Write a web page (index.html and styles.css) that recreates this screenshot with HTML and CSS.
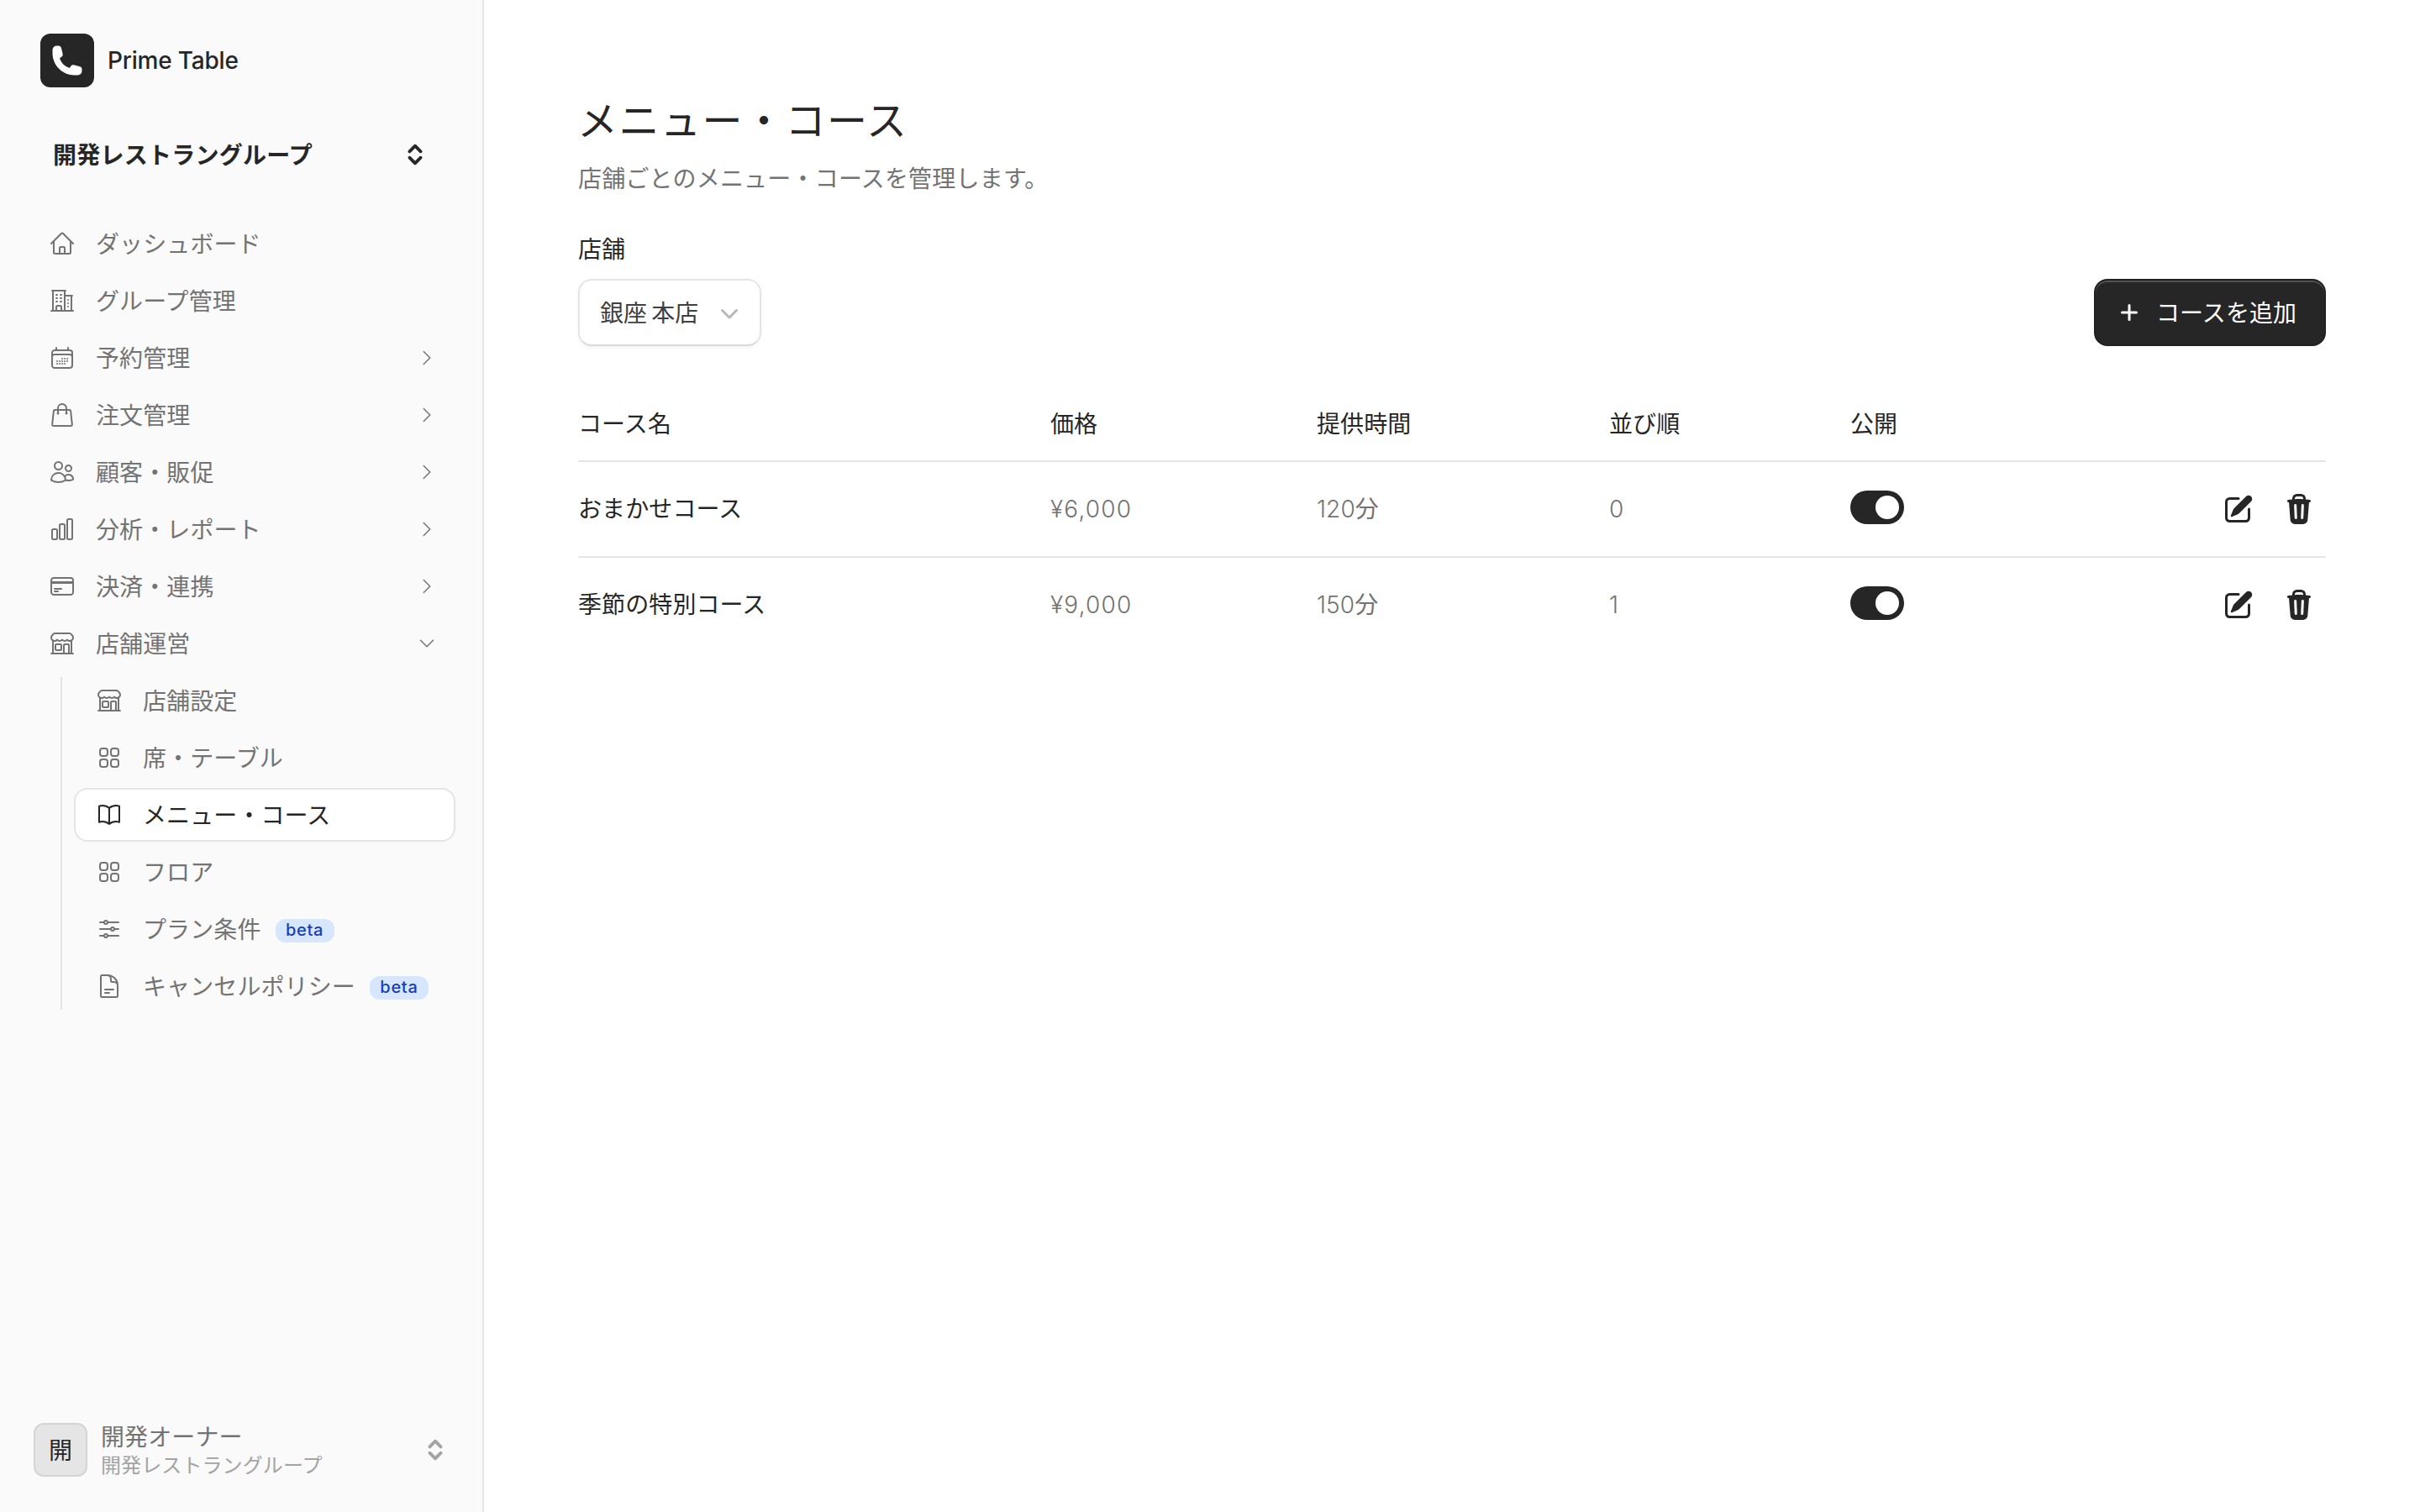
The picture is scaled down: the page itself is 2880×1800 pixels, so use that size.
FILE: index.html
```html
<!DOCTYPE html>
<html lang="ja">
<head>
<meta charset="utf-8">
<title>メニュー・コース</title>
<link rel="stylesheet" href="styles.css">
</head>
<body>
<svg class="sprite" aria-hidden="true">
  <symbol id="home" viewBox="0 0 24 24"><path d="m2.25 12 8.954-8.955c.44-.439 1.152-.439 1.591 0L21.75 12M4.5 9.75v10.125c0 .621.504 1.125 1.125 1.125H9.75v-4.875c0-.621.504-1.125 1.125-1.125h2.25c.621 0 1.125.504 1.125 1.125V21h4.125c.621 0 1.125-.504 1.125-1.125V9.75M8.25 21h8.25"/></symbol>
  <symbol id="office" viewBox="0 0 24 24"><path d="M2.25 21h19.5m-18-18v18m10.5-18v18m6-13.5V21M6.75 6.75h.75m-.75 3h.75m-.75 3h.75m3-6h.75m-.75 3h.75m-.75 3h.75M6.75 21v-3.375c0-.621.504-1.125 1.125-1.125h2.25c.621 0 1.125.504 1.125 1.125V21M3 3h12m-.75 4.5H21m-3.75 3.75h.008v.008h-.008v-.008Zm0 3h.008v.008h-.008v-.008Zm0 3h.008v.008h-.008v-.008Z"/></symbol>
  <symbol id="calendar" viewBox="0 0 24 24"><path d="M6.75 3v2.25M17.25 3v2.25M3 18.75V7.5a2.25 2.25 0 0 1 2.25-2.25h13.5A2.25 2.25 0 0 1 21 7.5v11.25m-18 0A2.25 2.25 0 0 0 5.25 21h13.5A2.25 2.25 0 0 0 21 18.75m-18 0v-7.5A2.25 2.25 0 0 1 5.25 9h13.5A2.25 2.25 0 0 1 21 11.25v7.5m-9-6h.008v.008H12v-.008ZM12 15h.008v.008H12V15Zm0 2.25h.008v.008H12v-.008ZM9.75 15h.008v.008H9.75V15Zm0 2.25h.008v.008H9.75v-.008ZM7.5 15h.008v.008H7.5V15Zm0 2.25h.008v.008H7.5v-.008Zm6.75-4.5h.008v.008h-.008v-.008Zm0 2.25h.008v.008h-.008V15Zm0 2.25h.008v.008h-.008v-.008Zm2.25-4.5h.008v.008H16.5v-.008Zm0 2.25h.008v.008H16.5V15Z"/></symbol>
  <symbol id="bag" viewBox="0 0 24 24"><path d="M15.75 10.5V6a3.75 3.75 0 1 0-7.5 0v4.5m11.356-1.993 1.263 12c.07.665-.45 1.243-1.119 1.243H4.25a1.125 1.125 0 0 1-1.12-1.243l1.264-12A1.125 1.125 0 0 1 5.513 7.5h12.974c.576 0 1.059.435 1.119 1.007ZM8.625 10.5a.375.375 0 1 1-.75 0 .375.375 0 0 1 .75 0Zm7.5 0a.375.375 0 1 1-.75 0 .375.375 0 0 1 .75 0Z"/></symbol>
  <symbol id="users" viewBox="0 0 24 24"><path d="M15 19.128a9.38 9.38 0 0 0 2.625.372 9.337 9.337 0 0 0 4.121-.952 4.125 4.125 0 0 0-7.533-2.493M15 19.128v-.003c0-1.113-.285-2.16-.786-3.07M15 19.128v.106A12.318 12.318 0 0 1 8.624 21c-2.331 0-4.512-.645-6.374-1.766l-.001-.109a6.375 6.375 0 0 1 11.964-3.07M12 6.375a3.375 3.375 0 1 1-6.75 0 3.375 3.375 0 0 1 6.75 0Zm8.25 2.25a2.625 2.625 0 1 1-5.25 0 2.625 2.625 0 0 1 5.25 0Z"/></symbol>
  <symbol id="chart" viewBox="0 0 24 24"><path d="M3 13.125C3 12.504 3.504 12 4.125 12h2.25c.621 0 1.125.504 1.125 1.125v6.75C7.5 20.496 6.996 21 6.375 21h-2.25A1.125 1.125 0 0 1 3 19.875v-6.75ZM9.75 8.625c0-.621.504-1.125 1.125-1.125h2.25c.621 0 1.125.504 1.125 1.125v11.25c0 .621-.504 1.125-1.125 1.125h-2.25a1.125 1.125 0 0 1-1.125-1.125V8.625ZM16.5 4.125c0-.621.504-1.125 1.125-1.125h2.25C20.496 3 21 3.504 21 4.125v15.75c0 .621-.504 1.125-1.125 1.125h-2.25a1.125 1.125 0 0 1-1.125-1.125V4.125Z"/></symbol>
  <symbol id="card" viewBox="0 0 24 24"><path d="M2.25 8.25h19.5M2.25 9h19.5m-16.5 5.25h6m-6 2.25h3m-3.75 3h15a2.25 2.25 0 0 0 2.25-2.25V6.75A2.25 2.25 0 0 0 19.5 4.5h-15a2.25 2.25 0 0 0-2.25 2.25v10.5A2.25 2.25 0 0 0 4.5 19.5Z"/></symbol>
  <symbol id="store" viewBox="0 0 24 24"><path d="M13.5 21v-7.5a.75.75 0 0 1 .75-.75h3a.75.75 0 0 1 .75.75V21m-4.5 0H2.36m11.14 0H18m0 0h3.64m-1.39 0V9.349M3.75 21V9.349m0 0a3.001 3.001 0 0 0 3.75-.615A2.993 2.993 0 0 0 9.75 9.75c.896 0 1.7-.393 2.25-1.016a2.993 2.993 0 0 0 2.25 1.016c.896 0 1.7-.393 2.25-1.015a3.001 3.001 0 0 0 3.75.614m-16.5 0a3.004 3.004 0 0 1-.621-4.72l1.189-1.19A1.5 1.5 0 0 1 5.378 3h13.243a1.5 1.5 0 0 1 1.06.44l1.19 1.189a3 3 0 0 1-.621 4.72M6.75 18h3.75a.75.75 0 0 0 .75-.75V13.5a.75.75 0 0 0-.75-.75H6.75a.75.75 0 0 0-.75.75v3.75c0 .414.336.75.75.75Z"/></symbol>
  <symbol id="grid" viewBox="0 0 24 24"><rect x="3.75" y="3.75" width="6.75" height="6.75" rx="2.25"/><rect x="13.5" y="3.75" width="6.75" height="6.75" rx="2.25"/><rect x="3.75" y="13.5" width="6.75" height="6.75" rx="2.25"/><rect x="13.5" y="13.5" width="6.75" height="6.75" rx="2.25"/></symbol>
  <symbol id="book" viewBox="0 0 24 24"><path d="M12 6.042A8.967 8.967 0 0 0 6 3.75c-1.052 0-2.062.18-3 .512v14.25A8.987 8.987 0 0 1 6 18c2.305 0 4.408.867 6 2.292m0-14.25a8.966 8.966 0 0 1 6-2.292c1.052 0 2.062.18 3 .512v14.25A8.987 8.987 0 0 0 18 18a8.967 8.967 0 0 0-6 2.292m0-14.25v14.25"/></symbol>
  <symbol id="sliders" viewBox="0 0 24 24"><path d="M10.5 6h9.75M10.5 6a1.5 1.5 0 1 1-3 0m3 0a1.5 1.5 0 1 0-3 0M3.75 6H7.5m3 12h9.75m-9.75 0a1.5 1.5 0 0 1-3 0m3 0a1.5 1.5 0 0 0-3 0m-3.75 0H7.5m9-6h3.75m-3.75 0a1.5 1.5 0 0 1-3 0m3 0a1.5 1.5 0 0 0-3 0m-9.75 0h9.75"/></symbol>
  <symbol id="document" viewBox="0 0 24 24"><path d="M19.5 14.25v-2.625a3.375 3.375 0 0 0-3.375-3.375h-1.5A1.125 1.125 0 0 1 13.5 7.125v-1.5a3.375 3.375 0 0 0-3.375-3.375H8.25m0 12.75h7.5m-7.5 3H12M10.5 2.25H5.625c-.621 0-1.125.504-1.125 1.125v17.25c0 .621.504 1.125 1.125 1.125h12.75c.621 0 1.125-.504 1.125-1.125V11.25a9 9 0 0 0-9-9Z"/></symbol>
  <symbol id="right" viewBox="0 0 24 24"><path d="m8.25 4.5 7.5 7.5-7.5 7.5"/></symbol>
  <symbol id="down" viewBox="0 0 24 24"><path d="m19.5 8.25-7.5 7.5-7.5-7.5"/></symbol>
  <symbol id="phone" viewBox="0 0 24 24"><path d="M1.5 4.5a3 3 0 0 1 3-3h1.372c.86 0 1.61.586 1.819 1.42l1.105 4.423a1.875 1.875 0 0 1-.694 1.955l-1.293.97c-.135.101-.164.249-.126.352a11.285 11.285 0 0 0 6.697 6.697c.103.038.25.009.352-.126l.97-1.293a1.875 1.875 0 0 1 1.955-.694l4.423 1.105c.834.209 1.42.959 1.42 1.82V19.5a3 3 0 0 1-3 3h-2.25C8.552 22.5 1.5 15.448 1.5 6.75V4.5Z"/></symbol>
  <symbol id="updown" viewBox="0 0 20 20"><path d="M6.7 8.15 10 4.85l3.3 3.3M6.7 11.85l3.3 3.3 3.3-3.3" fill="none" stroke="currentColor" stroke-width="1.9" stroke-linecap="round" stroke-linejoin="round"/></symbol>
  <symbol id="select-down" viewBox="0 0 20 20"><path d="M5.22 8.22a.75.75 0 0 1 1.06 0L10 11.94l3.72-3.72a.75.75 0 1 1 1.06 1.06l-4.25 4.25a.75.75 0 0 1-1.06 0L5.22 9.28a.75.75 0 0 1 0-1.06Z"/></symbol>
  <symbol id="plus" viewBox="0 0 16 16"><path d="M8.75 3.75a.75.75 0 0 0-1.5 0v3.5h-3.5a.75.75 0 0 0 0 1.5h3.5v3.5a.75.75 0 0 0 1.5 0v-3.5h3.5a.75.75 0 0 0 0-1.5h-3.5v-3.5Z"/></symbol>
  <symbol id="edit" viewBox="0 0 20 20"><path d="m5.433 13.917 1.262-3.155A4 4 0 0 1 7.58 9.42l6.92-6.918a2.121 2.121 0 0 1 3 3l-6.92 6.918c-.383.383-.84.685-1.343.886l-3.154 1.262a.5.5 0 0 1-.65-.65Z"/><path d="M3.5 5.75c0-.69.56-1.25 1.25-1.25H10A.75.75 0 0 0 10 3H4.75A2.75 2.75 0 0 0 2 5.75v9.5A2.75 2.75 0 0 0 4.75 18h9.5A2.75 2.75 0 0 0 17 15.25V10a.75.75 0 0 0-1.5 0v5.25c0 .69-.56 1.25-1.25 1.25h-9.5c-.69 0-1.25-.56-1.25-1.25v-9.5Z"/></symbol>
  <symbol id="trash" viewBox="0 0 20 20"><path fill-rule="evenodd" d="M8.75 1A2.75 2.75 0 0 0 6 3.75v.443c-.795.077-1.584.176-2.365.298a.75.75 0 1 0 .23 1.482l.149-.022.841 10.518A2.75 2.75 0 0 0 7.596 19h4.807a2.75 2.75 0 0 0 2.742-2.53l.841-10.52.149.023a.75.75 0 0 0 .23-1.482A41.03 41.03 0 0 0 14 4.193V3.75A2.75 2.75 0 0 0 11.25 1h-2.5ZM10 4c.84 0 1.673.025 2.5.075V3.75c0-.69-.56-1.25-1.25-1.25h-2.5c-.69 0-1.25.56-1.25 1.25v.325C8.327 4.025 9.16 4 10 4ZM8.58 7.72a.75.75 0 0 0-1.5.06l.3 7.5a.75.75 0 1 0 1.5-.06l-.3-7.5Zm4.34.06a.75.75 0 1 0-1.5-.06l-.3 7.5a.75.75 0 1 0 1.5.06l.3-7.5Z"/></symbol>
</svg>
<div class="app">
  <aside class="sidebar">
    <div class="brand">
      <span class="brand-mark"><svg class="solid"><use href="#phone"/></svg></span>
      <span class="brand-name">Prime Table</span>
    </div>
    <div class="switcher"><span class="text">開発レストラングループ</span><svg class="solid"><use href="#updown"/></svg></div>
    <nav class="nav">
      <a class="item"><svg class="icon"><use href="#home"/></svg><span class="text">ダッシュボード</span></a>
      <a class="item"><svg class="icon"><use href="#office"/></svg><span class="text">グループ管理</span></a>
      <a class="item"><svg class="icon"><use href="#calendar"/></svg><span class="text">予約管理</span><svg class="icon arrow"><use href="#right"/></svg></a>
      <a class="item"><svg class="icon"><use href="#bag"/></svg><span class="text">注文管理</span><svg class="icon arrow"><use href="#right"/></svg></a>
      <a class="item"><svg class="icon"><use href="#users"/></svg><span class="text">顧客・販促</span><svg class="icon arrow"><use href="#right"/></svg></a>
      <a class="item"><svg class="icon"><use href="#chart"/></svg><span class="text">分析・レポート</span><svg class="icon arrow"><use href="#right"/></svg></a>
      <a class="item"><svg class="icon"><use href="#card"/></svg><span class="text">決済・連携</span><svg class="icon arrow"><use href="#right"/></svg></a>
      <a class="item"><svg class="icon"><use href="#store"/></svg><span class="text">店舗運営</span><svg class="icon arrow"><use href="#down"/></svg></a>
      <div class="subnav">
        <div class="rail"></div>
        <div class="sublist">
          <a class="item"><svg class="icon"><use href="#store"/></svg><span class="text">店舗設定</span></a>
          <a class="item"><svg class="icon"><use href="#grid"/></svg><span class="text">席・テーブル</span></a>
          <a class="item current"><svg class="icon"><use href="#book"/></svg><span class="text">メニュー・コース</span></a>
          <a class="item"><svg class="icon"><use href="#grid"/></svg><span class="text">フロア</span></a>
          <a class="item"><svg class="icon"><use href="#sliders"/></svg><span class="text">プラン条件</span><span class="badge">beta</span></a>
          <a class="item"><svg class="icon"><use href="#document"/></svg><span class="text">キャンセルポリシー</span><span class="badge">beta</span></a>
        </div>
      </div>
    </nav>
    <div class="profile">
      <span class="avatar"><span class="text">開</span></span>
      <div class="who"><div class="name">開発オーナー</div><div class="org">開発レストラングループ</div></div>
      <svg class="solid"><use href="#updown"/></svg>
    </div>
  </aside>
  <main class="main">
    <h1 class="title">メニュー・コース</h1>
    <p class="subtitle">店舗ごとのメニュー・コースを管理します。</p>
    <div class="toolbar">
      <div class="field">
        <div class="label">店舗</div>
        <div class="select"><span class="text">銀座 本店</span><svg class="solid"><use href="#select-down"/></svg></div>
      </div>
      <button class="add"><svg class="solid"><use href="#plus"/></svg><span class="text">コースを追加</span></button>
    </div>
    <div class="table">
      <div class="row head"><span>コース名</span><span>価格</span><span>提供時間</span><span>並び順</span><span>公開</span><span></span></div>
      <div class="row">
        <span class="strong">おまかせコース</span><span class="num price">¥6,000</span><span><span class="num">120</span>分</span><span class="num">0</span>
        <span class="switch"><i></i></span>
        <span class="actions"><svg class="solid"><use href="#edit"/></svg><svg class="solid"><use href="#trash"/></svg></span>
      </div>
      <div class="row">
        <span class="strong">季節の特別コース</span><span class="num price">¥9,000</span><span><span class="num">150</span>分</span><span class="num">1</span>
        <span class="switch"><i></i></span>
        <span class="actions"><svg class="solid"><use href="#edit"/></svg><svg class="solid"><use href="#trash"/></svg></span>
      </div>
    </div>
  </main>
</div>
</body>
</html>
```
FILE: styles.css
```css
* { box-sizing: border-box; }
body {
  margin: 0;
  background: #fff;
  color: #262626;
  font: 400 28px/40px Inter, "Noto Sans CJK JP", sans-serif;
  letter-spacing: .1px;
  white-space: nowrap;
}
.sprite { position: absolute; width: 0; height: 0; }
svg { flex: none; }
.solid { fill: currentColor; width: 40px; height: 40px; }
.icon {
  width: 32px; height: 32px;
  fill: none; stroke: currentColor; stroke-width: 1.5;
  stroke-linecap: round; stroke-linejoin: round;
}
.text { padding-top: 2px; }
.app { display: flex; height: 1800px; }

.sidebar {
  width: 576px; flex: none;
  display: flex; flex-direction: column;
  background: #fafafa;
  border-right: 2px solid #e5e5e5;
  padding: 40px 32px;
}
.brand { display: flex; align-items: center; gap: 16px; padding-left: 16px; height: 64px; }
.brand-mark {
  width: 64px; height: 64px; border-radius: 12px;
  background: #262626; color: #fff;
  display: flex; align-items: center; justify-content: center;
}
.brand-name { font-weight: 500; letter-spacing: -.2px; }
.switcher {
  display: flex; align-items: center; justify-content: space-between;
  height: 80px; margin-top: 40px; padding: 0 28px 0 31px;
  font-weight: 700; letter-spacing: .25px;
}
.nav { margin-top: 34px; display: flex; flex-direction: column; gap: 4px; color: #737373; }
.item {
  height: 64px; padding: 0 20px 0 24px;
  border: 2px solid transparent; border-radius: 16px;
  display: flex; align-items: center;
}
.item .icon { margin-right: 24px; }
.item .arrow { width: 24px; height: 24px; margin: 0 0 0 auto; }
.subnav { display: flex; padding-left: 40px; }
.rail { width: 2px; margin: 4px 14px 4px 0; background: #e5e5e5; }
.sublist { flex: 1; display: flex; flex-direction: column; gap: 4px; }
.current { background: #fff; border-color: #e5e5e5; color: #262626; }
.badge {
  margin: 4px 0 0 17px; width: 70px; height: 28px; border-radius: 12px;
  background: #d6e6fd; color: #193cb8;
  font-size: 20px; font-weight: 500; line-height: 27px; text-align: center;
  letter-spacing: .7px;
}
.profile { margin-top: auto; display: flex; align-items: center; height: 68px; padding: 0 4px 0 8px; }
.avatar {
  width: 64px; height: 64px; margin-right: 16px;
  border: 2px solid #d4d4d4; border-radius: 12px; background: #e5e5e5;
  display: flex; align-items: center; justify-content: center;
}
.who { flex: 1; padding-top: 2px; }
.name { line-height: 36px; color: #737373; }
.org { font-size: 24px; line-height: 32px; color: #a3a3a3; }
.profile .solid { color: #a3a3a3; }

.main { flex: 1; padding: 112px 112px 0; }
.title { margin: 0; font-size: 48px; font-weight: 400; line-height: 64px; letter-spacing: 1.5px; text-indent: -1px; }
.subtitle { margin: 17px 0 0; color: #737373; letter-spacing: .2px; }
.toolbar { margin-top: 43px; display: flex; align-items: flex-end; justify-content: space-between; }
.label { padding-top: 1px; }
.select {
  margin-top: 15px; width: 218px; height: 80px; padding: 0 16px 0 24px;
  display: flex; align-items: center; justify-content: space-between;
  border: 2px solid #e5e5e5; border-bottom-color: #d9d9d9; border-radius: 16px;
  box-shadow: 0 2px 4px rgba(0, 0, 0, .05);
  color: #404040; word-spacing: -3px;
}
.select .solid { color: #b8b8b8; }
.add {
  width: 276px; height: 80px; padding: 0 0 0 24px;
  display: flex; align-items: center; gap: 16px;
  border: 2px solid #212121; border-radius: 16px;
  background: #262626; color: #fff; font: inherit; letter-spacing: .1px;
  box-shadow: inset 0 2px rgba(255, 255, 255, .2);
}
.add .solid { width: 32px; height: 32px; }
.table { margin-top: 50px; }
.row {
  display: grid; grid-template-columns: 562px 317px 348px 287px 1fr 132px;
  align-items: center; height: 114px;
  color: #737373;
  border-bottom: 2px solid #e5e5e5;
}
.row:last-child { height: 112px; border-bottom: 0; }
.head { height: 88px; color: #262626; }
.strong { color: #262626; }
.num { font-weight: 300; }
.price { letter-spacing: 1.2px; }
.switch {
  width: 64px; height: 40px; border-radius: 20px; margin-bottom: 4px;
  padding: 6px; background: #262626;
  display: flex; justify-content: flex-end;
}
.switch i { width: 28px; height: 28px; border-radius: 50%; background: #fff; }
.actions { display: flex; gap: 32px; padding-left: 8px; color: #262626; }
```
